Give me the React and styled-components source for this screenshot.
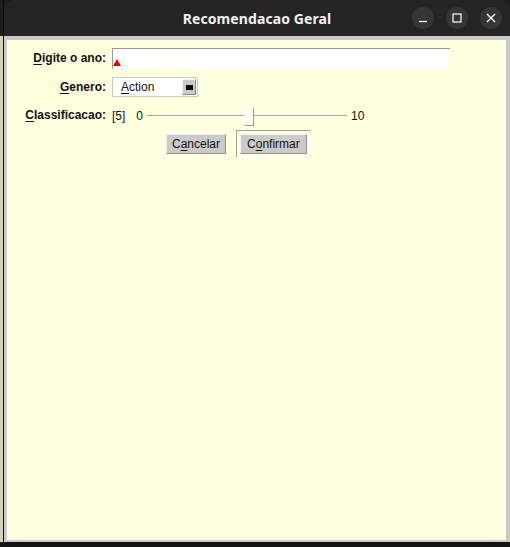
import React from 'react'
import styled, { createGlobalStyle } from 'styled-components'

const GlobalStyle = createGlobalStyle`
    html, body {
        margin: 0;
        padding: 0;
        background: #121212;
    }
    body {
        font-family: "Liberation Sans", Arial, sans-serif;
    }
`

export default function App() {
    return (
        <Desktop>
            <GlobalStyle />
            <Window>
                <TitleBar>
                    <span />
                    <Title>Recomendacao Geral</Title>
                    <Controls>
                        <WinButton aria-label="minimizar">
                            <svg width="10" height="10" viewBox="0 0 10 10">
                                <path d="M1 8.5h8" stroke="#fff" strokeWidth="1.2" />
                            </svg>
                        </WinButton>
                        <WinButton aria-label="maximizar">
                            <svg width="10" height="10" viewBox="0 0 10 10">
                                <rect x="1" y="1" width="8" height="8" fill="none" stroke="#fff" strokeWidth="1.2" />
                            </svg>
                        </WinButton>
                        <WinButton aria-label="fechar">
                            <svg width="10" height="10" viewBox="0 0 10 10">
                                <path d="M1 1l8 8M9 1l-8 8" stroke="#fff" strokeWidth="1.3" />
                            </svg>
                        </WinButton>
                    </Controls>
                </TitleBar>
                <Frame>
                    <Content>
                        <Row $top={8}>
                            <Label $lift><u>D</u>igite o ano:</Label>
                            <TextField>
                                <Caret />
                            </TextField>
                        </Row>
                        <Row $top={8}>
                            <Label><u>G</u>enero:</Label>
                            <Combo>
                                <ComboText><u>A</u>ction</ComboText>
                                <ComboArrow>
                                    <ArrowMark />
                                </ComboArrow>
                            </Combo>
                        </Row>
                        <Row $top={9}>
                            <Label $lift><u>C</u>lassificacao:</Label>
                            <SliderLine>
                                <Value>[5]</Value>
                                <Value $left={11}>0</Value>
                                <Track>
                                    <Thumb />
                                </Track>
                                <Value $left={4}>10</Value>
                            </SliderLine>
                        </Row>
                        <ButtonRow>
                            <PushButton>C<u>a</u>ncelar</PushButton>
                            <FocusBox>
                                <PushButton $pad={6}>C<u>o</u>nfirmar</PushButton>
                            </FocusBox>
                        </ButtonRow>
                    </Content>
                </Frame>
            </Window>
        </Desktop>
    )
}

const Desktop = styled.div`
    width: 510px;
    height: 547px;
    overflow: hidden;
    background: linear-gradient(to bottom, #1c1c1c 0 36px, #d4d1b4 36px 542px, #121212 542px);
`
const Window = styled.div`
    margin-left: 3px;
    width: 507px;
    height: 542px;
    display: flex;
    flex-direction: column;
    border-left: 1px solid #0e0e0e;
    box-sizing: border-box;
`
const TitleBar = styled.div`
    height: 36px;
    flex: none;
    background: #242424;
    border-radius: 10px 10px 0 0;
    display: grid;
    grid-template-columns: 1fr auto 1fr;
    align-items: center;
`
const Title = styled.div`
    font-family: "Noto Sans", "DejaVu Sans", sans-serif;
    font-weight: 700;
    font-size: 14px;
    color: #f2f2f2;
    letter-spacing: 0.1px;
`
const Controls = styled.div`
    display: flex;
    justify-content: flex-end;
    gap: 12px;
    padding-right: 8px;
`
const WinButton = styled.div`
    width: 22px;
    height: 22px;
    border-radius: 50%;
    background: #363636;
    display: flex;
    align-items: center;
    justify-content: center;
`
const Frame = styled.div`
    flex: 1;
    background: #c9c9c9;
    padding: 4px 4px 2px 3px;
    display: flex;
`
const Content = styled.div`
    flex: 1;
    background: #ffffe0;
    display: flex;
    flex-direction: column;
    color: #111;
    font-size: 12px;
`
const Row = styled.div`
    display: flex;
    align-items: center;
    margin-top: ${p => p.$top}px;
`
const Label = styled.div`
    width: 99px;
    flex: none;
    text-align: right;
    font-weight: 700;
    margin-right: 6px;
    position: relative;
    top: ${p => (p.$lift ? -1 : 0)}px;
    u { text-decoration-thickness: 1px; text-underline-offset: 2px; }
`
const TextField = styled.div`
    width: 338px;
    height: 21px;
    background: #fff;
    border-top: 1px solid #9b9b8c;
    border-left: 1px solid #9b9b8c;
    box-sizing: border-box;
    position: relative;
`
const Caret = styled.div`
    position: absolute;
    left: 0;
    top: 10px;
    width: 0;
    height: 0;
    border-left: 4px solid transparent;
    border-right: 4px solid transparent;
    border-bottom: 7px solid #f00000;
`
const Combo = styled.div`
    width: 86px;
    height: 20px;
    box-sizing: border-box;
    background: #fff;
    border: 1px solid #c9c9c0;
    display: flex;
    align-items: center;
    justify-content: space-between;
    padding: 0 1px 0 8px;
`
const ComboText = styled.span`
    u { text-decoration-thickness: 1px; text-underline-offset: 2px; }
`
const ComboArrow = styled.div`
    width: 14px;
    height: 16px;
    box-sizing: border-box;
    background: #c9c9c9;
    border-top: 1px solid #f4f4f4;
    border-left: 1px solid #f4f4f4;
    border-right: 1px solid #8a8a8a;
    border-bottom: 1px solid #8a8a8a;
    display: flex;
    align-items: center;
    justify-content: center;
`
const ArrowMark = styled.div`
    width: 7px;
    height: 5px;
    background: #000;
`
const SliderLine = styled.div`
    display: flex;
    align-items: center;
    height: 20px;
`
const Value = styled.span`
    margin-left: ${p => p.$left || 0}px;
`
const Track = styled.div`
    width: 200px;
    height: 2px;
    margin-left: 4px;
    border-top: 1px solid #a8a690;
    border-bottom: 1px solid #ffffff;
    box-sizing: border-box;
    display: flex;
    align-items: center;
    padding-left: 97px;
`
const Thumb = styled.div`
    width: 10px;
    height: 19px;
    flex: none;
    box-sizing: border-box;
    background: #fffff4;
    border-top: 1px solid #ffffff;
    border-left: 1px solid #ffffff;
    border-right: 1px solid #9c9a88;
    border-bottom: 1px solid #9c9a88;
    margin-top: 1px;
`
const ButtonRow = styled.div`
    display: flex;
    align-items: center;
    gap: 10px;
    margin-top: 4px;
    padding-left: 159px;
`
const PushButton = styled.button`
    font-family: "Liberation Sans", Arial, sans-serif;
    font-size: 12px;
    color: #111;
    height: 20px;
    padding: 0 ${p => p.$pad || 5}px;
    background: #cacaca;
    border-top: 1px solid #f2f2f2;
    border-left: 1px solid #f2f2f2;
    border-right: 1px solid #8e8e8e;
    border-bottom: 1px solid #8e8e8e;
    border-radius: 0;
    line-height: 16px;
    u { text-decoration-thickness: 1px; text-underline-offset: 2px; }
`
const FocusBox = styled.div`
    padding: 3px;
    border-top: 1px solid #a6a490;
    border-left: 1px solid #a6a490;
    border-right: 1px solid #ffffff;
    border-bottom: 1px solid #ffffff;
    display: flex;
`
